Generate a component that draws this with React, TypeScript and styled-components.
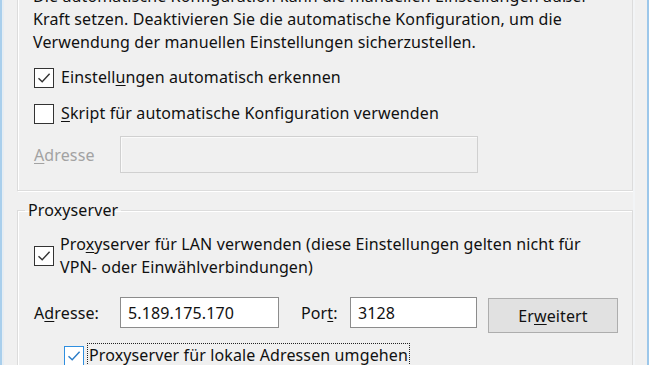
import React from 'react';
import styled, { createGlobalStyle } from 'styled-components';

const Global = createGlobalStyle`
  html, body { margin: 0; padding: 0; background: #f0f0f0; overflow: hidden; }
  body { font-family: "Noto Sans", "Open Sans", sans-serif; font-size: 16px; letter-spacing: 0.12px; color: #111; }
  #root { width: 649px; height: 365px; }
`;

const Window = styled.div`
  display: flex;
  width: 649px;
  height: 365px;
  overflow: hidden;
  background: #f0f0f0;
`;

const Edge = styled.div<{ $side: 'left' | 'right' }>`
  flex: none;
  width: 2px;
  background: ${(p) => (p.$side === 'left' ? '#a9cfec' : '#9cc7ea')};
  box-shadow: ${(p) => (p.$side === 'left' ? '2px 0 0 #e6edf3' : '-14px 0 0 #f2f4f6')};
`;

const Main = styled.div`
  flex: 1;
  min-width: 0;
  display: flex;
  flex-direction: column;
  padding: 0 14px 0 15px;
`;

const TopGroup = styled.div`
  margin-top: -15px;
  border: 1px solid #dcdcdc;
  border-top: none;
  box-shadow: 1px 1px 0 #fff, inset 1px 0 0 #fff;
  padding: 0 16px 17px 15px;
  display: flex;
  flex-direction: column;
`;

const Para = styled.div`
  line-height: 23px;
  white-space: nowrap;
  margin-bottom: 12px;
`;

const Line = styled.div``;

const CheckRow = styled.label<{ $indent?: number; $gap?: number }>`
  display: flex;
  align-items: center;
  gap: 6px;
  margin-left: ${(p) => p.$indent ?? 1}px;
  margin-top: ${(p) => p.$gap ?? 0}px;
  line-height: 23px;
  white-space: nowrap;
`;

const Box = styled.span<{ $focus?: boolean }>`
  flex: none;
  box-sizing: border-box;
  width: 20px;
  height: 20px;
  border: 1px solid ${(p) => (p.$focus ? '#2f8fe0' : '#333')};
  background: #fff;
  display: flex;
  align-items: center;
  justify-content: center;
`;

const CheckText = styled.span<{ $focus?: boolean }>`
  outline: ${(p) => (p.$focus ? '1px dotted #222' : 'none')};
  outline-offset: 0;
  padding: 0 1px;
  margin-left: ${(p) => (p.$focus ? '-2px' : '0')};
`;

const FieldRow = styled.div<{ $gap?: number }>`
  display: flex;
  align-items: flex-start;
  margin-top: ${(p) => p.$gap ?? 0}px;
`;

const Label = styled.span<{ $width: number; $disabled?: boolean; $h: number; $lead?: number }>`
  flex: none;
  width: ${(p) => p.$width}px;
  height: ${(p) => p.$h}px;
  margin-left: ${(p) => p.$lead ?? 0}px;
  display: flex;
  align-items: center;
  padding-left: 1px;
  box-sizing: border-box;
  color: ${(p) => (p.$disabled ? '#a2a2a2' : '#111')};
  white-space: nowrap;
`;

const Input = styled.div<{ $width: number; $h: number; $disabled?: boolean }>`
  flex: none;
  box-sizing: border-box;
  width: ${(p) => p.$width}px;
  height: ${(p) => p.$h}px;
  border: 1px solid ${(p) => (p.$disabled ? '#d0d0d0' : '#8c8c8c')};
  box-shadow: ${(p) => (p.$disabled ? 'inset 1px 1px 0 #fafafa' : 'none')};
  background: ${(p) => (p.$disabled ? '#f0f0f0' : '#fff')};
  display: flex;
  align-items: center;
  padding-left: 7px;
  white-space: nowrap;
  margin-right: ${(p) => (p.$disabled ? 0 : 11)}px;
`;

const Button = styled.button`
  flex: none;
  box-sizing: border-box;
  width: 130px;
  height: 35px;
  border: 1px solid #adadad;
  background: #e1e1e1;
  font: inherit;
  letter-spacing: inherit;
  color: #111;
  padding: 0;
  margin-top: 1px;
`;

const ProxyGroup = styled.fieldset`
  margin: 8px 0 0 0;
  border: 1px solid #dcdcdc;
  box-shadow: inset 1px 1px 0 #fff, 1px 0 0 #fff;
  padding: 12px 16px 20px 15px;
  min-width: 0;
  display: flex;
  flex-direction: column;
`;

const Legend = styled.legend`
  margin-left: -8px;
  padding: 0 3px;
  line-height: 22px;
  color: #111;
`;

const TwoLine = styled.span`
  display: flex;
  flex-direction: column;
  line-height: 23px;
`;

const Key = styled.span`
  text-decoration: underline;
  text-underline-offset: 2px;
`;

const Check: React.FC<{ focus?: boolean }> = ({ focus }) => (
  <svg width="14" height="12" viewBox="0 0 14 12">
    <path d="M1.5 6.2 L5.2 9.8 L12.6 1.8" fill="none" stroke={focus ? '#2a7cc7' : '#333'} strokeWidth="1.4" />
  </svg>
);

export default function App() {
  return (
    <>
      <Global />
      <Window>
        <Edge $side="left" />
        <Main>
          <TopGroup>
            <Para>
              <Line>Die automatische Konfiguration kann die manuellen Einstellungen außer</Line>
              <Line>Kraft setzen. Deaktivieren Sie die automatische Konfiguration, um die</Line>
              <Line>Verwendung der manuellen Einstellungen sicherzustellen.</Line>
            </Para>
            <CheckRow>
              <Box><Check /></Box>
              <CheckText>Einstell<Key>u</Key>ngen automatisch erkennen</CheckText>
            </CheckRow>
            <CheckRow $gap={13}>
              <Box />
              <CheckText><Key>S</Key>kript für automatische Konfiguration verwenden</CheckText>
            </CheckRow>
            <FieldRow $gap={11}>
              <Label $width={87} $h={37} $disabled><Key>A</Key>dresse</Label>
              <Input $width={358} $h={37} $disabled />
            </FieldRow>
          </TopGroup>
          <ProxyGroup>
            <Legend>Proxyserver</Legend>
            <CheckRow>
              <Box><Check /></Box>
              <TwoLine>
                <span>Pro<Key>x</Key>yserver für LAN verwenden (diese Einstellungen gelten nicht für</span>
                <span>VPN- oder Einwählverbindungen)</span>
              </TwoLine>
            </CheckRow>
            <FieldRow $gap={18}>
              <Label $width={87} $h={31}>A<Key>d</Key>resse:</Label>
              <Input $width={159} $h={31}>5.189.175.170</Input>
              <Label $width={50} $h={31} $lead={10}>Por<Key>t</Key>:</Label>
              <Input $width={127} $h={31}>3128</Input>
              <Button>Er<Key>w</Key>eitert</Button>
            </FieldRow>
            <CheckRow $indent={31} $gap={11}>
              <Box $focus><Check focus /></Box>
              <CheckText $focus>Proxyserver für lokale Adressen umgehen</CheckText>
            </CheckRow>
          </ProxyGroup>
        </Main>
        <Edge $side="right" />
      </Window>
    </>
  );
}
